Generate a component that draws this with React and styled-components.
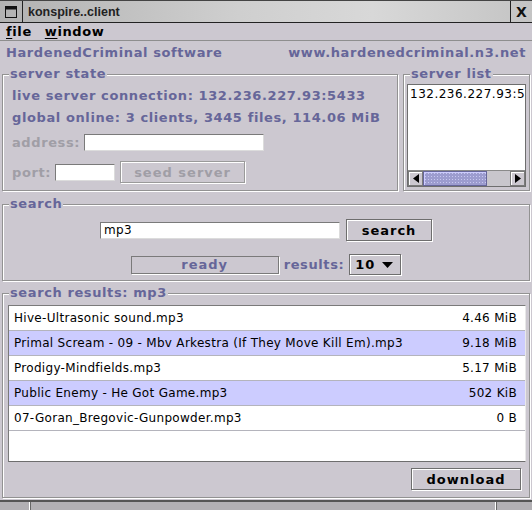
import React from 'react';
import styled, { createGlobalStyle } from 'styled-components';

const BG = '#ccc8d0';
const PURPLE = '#666699';
const FONT = '"DejaVu Sans", "Liberation Sans", sans-serif';

const Global = createGlobalStyle`
  html, body { margin: 0; padding: 0; background: ${BG}; overflow: hidden; }
  * { box-sizing: border-box; }
`;

const Window = styled.div`
  width: 532px;
  height: 510px;
  display: flex;
  flex-direction: column;
  background: ${BG};
  font-family: ${FONT};
  overflow: hidden;
`;

const TitleBar = styled.div`
  height: 23px;
  flex: none;
  display: flex;
  border-top: 1px solid #444;
  border-bottom: 1px solid #222;
  background: linear-gradient(90deg, #b2b2b2 0%, #cfcfcf 45%, #d8d8d8 70%, #c4c4c4 100%);
`;

const TitleIconBox = styled.div`
  width: 23px;
  border-right: 1px solid #222;
  display: flex;
  align-items: center;
  justify-content: center;
`;

const TitleText = styled.div`
  flex: 1;
  padding-left: 5px;
  display: flex;
  align-items: center;
  font: bold 12.5px "Liberation Sans", Arial, sans-serif;
  color: #222;
`;

const CloseBox = styled.div`
  width: 22px;
  border-left: 1px solid #222;
  display: flex;
  align-items: center;
  justify-content: center;
  font: bold 14px ${FONT};
  color: #111;
`;

const MenuBar = styled.div`
  height: 18px;
  flex: none;
  display: flex;
  align-items: center;
  gap: 13px;
  padding-left: 6px;
  border-bottom: 1px solid #8e8e8e;
`;

const MenuItem = styled.span`
  font: bold 13px ${FONT};
  color: #000;
  letter-spacing: 0.6px;
  & u { text-decoration-thickness: 1px; text-underline-offset: 2px; }
`;

const Header = styled.div`
  height: 23px;
  flex: none;
  display: flex;
  align-items: center;
  justify-content: space-between;
  padding: 0 6px;
  font: bold 13px ${FONT};
  color: ${PURPLE};
  letter-spacing: 0.6px;
`;

const Content = styled.div`
  flex: 1;
  display: flex;
  flex-direction: column;
  padding: 3px 2px 0 2px;
  min-height: 0;
`;

const TopRow = styled.div`
  display: flex;
  gap: 5px;
`;

const Group = styled.fieldset`
  margin: ${p => p.$mt || 0}px 0 0 0;
  padding: 0;
  border: 1px solid #929292;
  box-shadow: inset 1px 1px 0 #fff, 1px 1px 0 #fff;
  min-width: 0;
  width: ${p => p.$w || 'auto'};
  flex: ${p => p.$flex || 'none'};
  display: flex;
  flex-direction: column;
`;

const Legend = styled.legend`
  margin-left: 6px;
  padding: 0 1px;
  font: bold 13px/14px ${FONT};
  color: ${PURPLE};
  letter-spacing: 0.6px;
  background: ${BG};
`;

const GroupBody = styled.div`
  flex: 1;
  display: flex;
  flex-direction: column;
  padding: ${p => p.$pad};
  min-height: 0;
`;

const InfoLine = styled.div`
  height: 22px;
  font: bold 13px/22px ${FONT};
  color: ${PURPLE};
  letter-spacing: 0.6px;
  white-space: nowrap;
`;

const FieldRow = styled.div`
  display: flex;
  align-items: center;
  height: ${p => p.$h}px;
  margin-top: ${p => p.$mt}px;
  gap: 4px;
`;

const Label = styled.span`
  font: bold 13px ${FONT};
  color: ${p => (p.$disabled ? '#a09ea6' : PURPLE)};
  letter-spacing: 0.6px;
`;

const TextInput = styled.div`
  width: ${p => p.$w}px;
  height: 17px;
  background: #fff;
  border: 1px solid #7a7a7a;
  border-right-color: #dcdcdc;
  border-bottom-color: #dcdcdc;
  font: 12px/15px ${FONT};
  color: #000;
  padding-left: 3px;
  letter-spacing: 0.4px;
`;

const Button = styled.div`
  width: ${p => p.$w}px;
  height: 22px;
  display: flex;
  align-items: center;
  justify-content: center;
  border: 1px solid ${p => (p.$disabled ? '#9a9a9a' : '#6e6e6e')};
  box-shadow: inset 1px 1px 0 #fff, 1px 1px 0 #fff;
  font: bold 13px ${FONT};
  letter-spacing: 1px;
  color: ${p => (p.$disabled ? '#a09ea6' : '#000')};
  margin-left: ${p => p.$ml || 0}px;
`;

const ListBox = styled.div`
  flex: 1;
  display: flex;
  flex-direction: column;
  background: #fff;
  border: 1px solid #6e6e6e;
  overflow: hidden;
`;

const ListText = styled.div`
  flex: 1;
  padding: 1px 0 0 2px;
  font: 12px/16px ${FONT};
  color: #000;
  letter-spacing: 0.5px;
  white-space: nowrap;
  overflow: hidden;
`;

const HScroll = styled.div`
  height: 16px;
  display: flex;
  background: ${BG};
  border-top: 1px solid #8a8a8a;
`;

const ScrollBtn = styled.div`
  width: 15px;
  display: flex;
  align-items: center;
  justify-content: center;
  background: ${BG};
  border: 1px solid #7a7a7a;
  box-shadow: inset 1px 1px 0 #fff;
`;

const Thumb = styled.div`
  width: 64px;
  background-color: #9c9ccf;
  background-image: radial-gradient(#c8c8f0 0.8px, transparent 0.9px);
  background-size: 3px 3px;
  border: 1px solid #66669a;
  box-shadow: inset 1px 1px 0 #ccccff;
`;

const Track = styled.div`
  flex: 1;
  background: #c8c6cc;
`;

const SearchRow = styled.div`
  display: flex;
  align-items: center;
  justify-content: center;
  gap: ${p => p.$gap}px;
  margin-top: ${p => p.$mt}px;
  height: ${p => p.$h}px;
`;

const Progress = styled.div`
  width: 148px;
  height: 18px;
  border: 1px solid #7a7a7a;
  box-shadow: 1px 1px 0 #fff;
  display: flex;
  align-items: center;
  justify-content: center;
  font: bold 13px ${FONT};
  color: ${PURPLE};
  letter-spacing: 1px;
`;

const Combo = styled.div`
  width: 52px;
  height: 21px;
  border: 1px solid #6e6e6e;
  box-shadow: inset 1px 1px 0 #fff, 1px 1px 0 #fff;
  display: flex;
  align-items: center;
  justify-content: space-between;
  padding: 0 7px 0 5px;
  font: bold 13px ${FONT};
  color: #000;
  letter-spacing: 1px;
`;

const Table = styled.div`
  height: 157px;
  flex: none;
  background: #fff;
  border: 1px solid #7a7a7a;
  border-right-color: #e8e8e8;
  border-bottom-color: #6e6e6e;
  display: flex;
  flex-direction: column;
`;

const Row = styled.div`
  height: 25px;
  flex: none;
  display: flex;
  align-items: center;
  justify-content: space-between;
  padding: 0 8px 0 5px;
  background: ${p => (p.$alt ? '#ccccff' : '#fff')};
  border-bottom: 1px solid #b4b4bc;
  font: 12px ${FONT};
  letter-spacing: 0.3px;
  color: #000;
  white-space: nowrap;
`;

const Footer = styled.div`
  display: flex;
  justify-content: flex-end;
  padding: 6px 5px 0 0;
`;

const StatusStrip = styled.div`
  flex: none;
  height: 10px;
  margin-top: 2px;
  border-top: 2px solid #555;
  display: flex;
  background: #b2b0b4;
`;

const StripCell = styled.div`
  width: ${p => (p.$w ? `${p.$w}px` : 'auto')};
  flex: ${p => (p.$w ? 'none' : 1)};
  border-left: ${p => (p.$sep ? '1px solid #fff' : 'none')};
  box-shadow: ${p => (p.$sep ? 'inset 1px 0 0 #666' : 'none')};
`;

const WindowIcon = () => (
  <svg width="12" height="12" viewBox="0 0 12 12">
    <rect x="0.5" y="0.5" width="11" height="11" fill="none" stroke="#111" strokeWidth="1" />
    <rect x="0.5" y="0.5" width="11" height="3" fill="#111" />
  </svg>
);

const Arrow = ({ dir }) => (
  <svg width="6" height="9" viewBox="0 0 6 9">
    {dir === 'left' ? <polygon points="6,0 0,4.5 6,9" fill="#000" /> : <polygon points="0,0 6,4.5 0,9" fill="#000" />}
  </svg>
);

const DownTri = () => (
  <svg width="11" height="6" viewBox="0 0 11 6">
    <polygon points="0,0 11,0 5.5,6" fill="#000" />
  </svg>
);

const results = [
  ['Hive-Ultrasonic sound.mp3', '4.46 MiB'],
  ['Primal Scream - 09 - Mbv Arkestra (If They Move Kill Em).mp3', '9.18 MiB'],
  ['Prodigy-Mindfields.mp3', '5.17 MiB'],
  ['Public Enemy - He Got Game.mp3', '502 KiB'],
  ['07-Goran_Bregovic-Gunpowder.mp3', '0 B'],
];

export default function App() {
  return (
    <>
      <Global />
      <Window>
        <TitleBar>
          <TitleIconBox><WindowIcon /></TitleIconBox>
          <TitleText>konspire..client</TitleText>
          <CloseBox>X</CloseBox>
        </TitleBar>
        <MenuBar>
          <MenuItem><u>f</u>ile</MenuItem>
          <MenuItem><u>w</u>indow</MenuItem>
        </MenuBar>
        <Header>
          <span>HardenedCriminal software</span>
          <span>www.hardenedcriminal.n3.net</span>
        </Header>
        <Content>
          <TopRow>
            <Group $flex="1">
              <Legend>server state</Legend>
              <GroupBody $pad="4px 8px 7px 9px">
                <InfoLine>live server connection: 132.236.227.93:5433</InfoLine>
                <InfoLine>global online: 3 clients, 3445 files, 114.06 MiB</InfoLine>
                <FieldRow $h={20} $mt={3}>
                  <Label $disabled>address:</Label>
                  <TextInput $w={180} />
                </FieldRow>
                <FieldRow $h={22} $mt={9}>
                  <Label $disabled>port:</Label>
                  <TextInput $w={60} />
                  <Button $w={125} $ml={1} $disabled>seed server</Button>
                </FieldRow>
              </GroupBody>
            </Group>
            <Group $w="127px">
              <Legend>server list</Legend>
              <GroupBody $pad="3px">
                <ListBox>
                  <ListText>132.236.227.93:5433</ListText>
                  <HScroll>
                    <ScrollBtn><Arrow dir="left" /></ScrollBtn>
                    <Thumb />
                    <Track />
                    <ScrollBtn><Arrow dir="right" /></ScrollBtn>
                  </HScroll>
                </ListBox>
              </GroupBody>
            </Group>
          </TopRow>
          <Group $mt={6}>
            <Legend>search</Legend>
            <GroupBody $pad="8px 4px 5px 4px">
              <SearchRow $gap={6} $mt={0} $h={22}>
                <TextInput $w={240}>mp3</TextInput>
                <Button $w={86}>search</Button>
              </SearchRow>
              <SearchRow $gap={5} $mt={13} $h={21}>
                <Progress>ready</Progress>
                <Label>results:</Label>
                <Combo>10 <DownTri /></Combo>
              </SearchRow>
            </GroupBody>
          </Group>
          <Group $mt={5} $flex="1">
            <Legend>search results: mp3</Legend>
            <GroupBody $pad="5px 3px 0 5px">
              <Table>
                {results.map(([name, size], i) => (
                  <Row key={name} $alt={i % 2 === 1}>
                    <span>{name}</span>
                    <span>{size}</span>
                  </Row>
                ))}
              </Table>
              <Footer>
                <Button $w={110}>download</Button>
              </Footer>
            </GroupBody>
          </Group>
        </Content>
        <StatusStrip>
          <StripCell $w={29} />
          <StripCell $sep />
          <StripCell $w={37} $sep />
        </StatusStrip>
      </Window>
    </>
  );
}
